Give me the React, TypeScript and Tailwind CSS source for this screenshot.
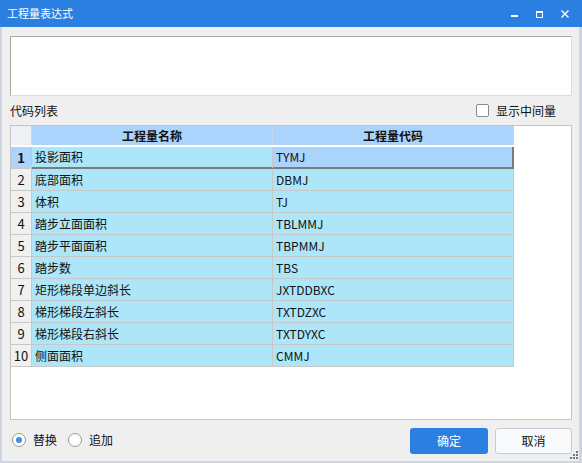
import { useState } from "react";

const rows = [
  { name: "投影面积", code: "TYMJ" },
  { name: "底部面积", code: "DBMJ" },
  { name: "体积", code: "TJ" },
  { name: "踏步立面面积", code: "TBLMMJ" },
  { name: "踏步平面面积", code: "TBPMMJ" },
  { name: "踏步数", code: "TBS" },
  { name: "矩形梯段单边斜长", code: "JXTDDBXC" },
  { name: "梯形梯段左斜长", code: "TXTDZXC" },
  { name: "梯形梯段右斜长", code: "TXTDYXC" },
  { name: "侧面面积", code: "CMMJ" },
];

function TitleBar() {
  return (
    <div className="h-[27px] bg-[#2b7fe0] flex items-center pl-[7px] shrink-0">
      <span className="text-white text-[11px] leading-none">工程量表达式</span>
      <div className="ml-auto flex items-center h-full">
        {/* minimise */}
        <svg width="25" height="27" viewBox="0 0 25 27" className="text-white">
          <rect x="9" y="15" width="7" height="2" fill="currentColor" />
        </svg>
        {/* maximise */}
        <svg width="25" height="27" viewBox="0 0 25 27" className="text-white">
          <rect x="9.5" y="11.5" width="6" height="6" fill="none" stroke="currentColor" strokeWidth="1" />
          <rect x="9" y="11" width="7" height="2" fill="currentColor" />
        </svg>
        {/* close */}
        <svg width="28" height="27" viewBox="0 0 28 27" className="text-white mr-[2px]">
          <path d="M9.5 10.5 L16.5 17.5 M16.5 10.5 L9.5 17.5" stroke="currentColor" strokeWidth="1.4" />
        </svg>
      </div>
    </div>
  );
}

function Table() {
  return (
    <div className="h-[295px] border border-[#c4c4c4] bg-white flex flex-col text-[12px] text-[#111]">
      {/* header */}
      <div className="flex h-[21px] border-b-2 border-white shrink-0">
        <div className="w-[21px] bg-[#eef0f4] border-r border-[#d0d4da]" />
        <div className="w-[241px] bg-[#aad4fb] border-r border-[#c6d6e6] flex items-center justify-center font-bold">
          工程量名称
        </div>
        <div className="w-[241px] bg-[#aad4fb] border-r border-[#c6d6e6] flex items-center justify-center font-bold">
          工程量代码
        </div>
      </div>
      {rows.map((r, i) => {
        const sel = i === 0;
        return (
          <div key={r.code} className="flex h-[22px] shrink-0">
            <div
              className={
                sel
                  ? "w-[21px] bg-[#aad4fb] border-r border-b border-[#c8c8c8] flex items-center justify-center font-bold text-[13px]"
                  : "w-[21px] bg-[#f0f0f0] border-r border-b border-[#c8c8c8] flex items-center justify-center text-[13px]"
              }
            >
              {i + 1}
            </div>
            <div
              className={
                sel
                  ? "w-[241px] bg-[#ade6f9] border-r border-[#c8c8c8] border-b-2 border-b-[#7a7a7a] flex items-center pl-[3px]"
                  : "w-[241px] bg-[#ade6f9] border-r border-b border-[#c8c8c8] flex items-center pl-[3px]"
              }
            >
              {r.name}
            </div>
            <div
              className={
                sel
                  ? "w-[241px] bg-[#aad4fb] border-r-2 border-b-2 border-[#7a7a7a] flex items-center pl-[3px]"
                  : "w-[241px] bg-[#ade6f9] border-r border-b border-[#c8c8c8] flex items-center pl-[3px]"
              }
            >
              {r.code}
            </div>
          </div>
        );
      })}
    </div>
  );
}

export default function App() {
  const [mode, setMode] = useState<"replace" | "append">("replace");
  const [showMid, setShowMid] = useState(false);

  return (
    <div className="w-[582px] h-[463px] flex flex-col bg-[#efefef] font-['Noto_Sans_CJK_SC','Microsoft_YaHei',sans-serif] relative overflow-hidden">
      <TitleBar />
      <div className="flex-1 flex flex-col border-l-2 border-r-[3px] border-b-2 border-[#ccd5e0] pl-[8px] pr-[7px] pt-[9px]">
        <textarea className="h-[60px] w-full resize-none bg-white border-t border-l border-[#a8a8a8] border-r border-b border-r-[#dcdcdc] border-b-[#dcdcdc] outline-none text-[12px] p-1" />
        <div className="h-[29px] flex items-center text-[12px] text-[#111]">
          <span>代码列表</span>
          <label className="ml-auto flex items-center gap-[7px] mr-[16px] cursor-pointer">
            <span
              onClick={() => setShowMid((p) => !p)}
              className="w-[13px] h-[13px] bg-white border border-[#8a8a8a] rounded-[2px] flex items-center justify-center text-[10px] leading-none"
            >
              {showMid ? "✓" : ""}
            </span>
            <span>显示中间量</span>
          </label>
        </div>
        <Table />
        <div className="flex items-center h-[40px] text-[12px] text-[#111]">
          <button onClick={() => setMode("replace")} className="flex items-center ml-[2px]">
            <span className="w-[14px] h-[14px] rounded-full border border-[#9a9a9a] bg-white flex items-center justify-center">
              {mode === "replace" && <span className="w-[6px] h-[6px] rounded-full bg-[#3d8ee8]" />}
            </span>
            <span className="ml-[7px]">替换</span>
          </button>
          <button onClick={() => setMode("append")} className="flex items-center ml-[11px]">
            <span className="w-[14px] h-[14px] rounded-full border border-[#9a9a9a] bg-white flex items-center justify-center">
              {mode === "append" && <span className="w-[6px] h-[6px] rounded-full bg-[#3d8ee8]" />}
            </span>
            <span className="ml-[7px]">追加</span>
          </button>
          <div className="ml-auto flex gap-[7px] pt-[1px]">
            <button className="w-[78px] h-[26px] rounded-[3px] bg-[#2b7fe0] text-white text-[12px]">确定</button>
            <button className="w-[77px] h-[26px] rounded-[3px] bg-[#f8f9fb] border border-[#c6ccd6] text-[#111] text-[12px]">
              取消
            </button>
          </div>
        </div>
      </div>
      {/* resize grip */}
      <svg width="10" height="10" viewBox="0 0 10 10" className="absolute right-[3px] bottom-[3px]">
        <rect x="7" y="1" width="2" height="2" fill="#6f7780" />
        <rect x="4" y="4" width="2" height="2" fill="#6f7780" />
        <rect x="7" y="4" width="2" height="2" fill="#6f7780" />
        <rect x="1" y="7" width="2" height="2" fill="#6f7780" />
        <rect x="4" y="7" width="2" height="2" fill="#6f7780" />
        <rect x="7" y="7" width="2" height="2" fill="#6f7780" />
      </svg>
    </div>
  );
}
